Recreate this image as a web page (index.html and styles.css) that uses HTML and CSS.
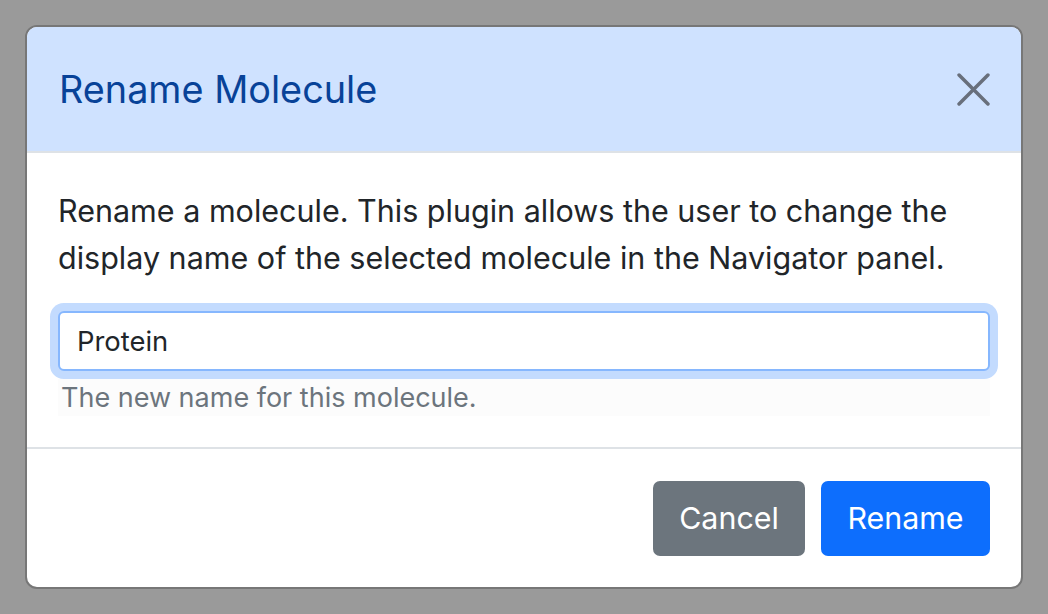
FILE: index.html
```html
<!DOCTYPE html>
<html lang="en">
<head>
<meta charset="utf-8">
<title>Rename Molecule</title>
<link rel="stylesheet" href="styles.css">
</head>
<body>
<div class="backdrop">
  <div class="modal">
    <div class="modal-header">
      <h5 class="modal-title">Rename Molecule</h5>
      <button class="btn-close" type="button" aria-label="Close">
        <svg viewBox="0 0 32 32" width="33" height="33"><path d="M2 2L30 30M30 2L2 30" stroke="currentColor" stroke-width="3.4" stroke-linecap="round" fill="none"/></svg>
      </button>
    </div>
    <div class="modal-body">
      <p class="desc">Rename a molecule. This plugin allows the user to change the display name of the selected molecule in the Navigator panel.</p>
      <input class="form-control" type="text" value="Protein">
      <div class="form-text">The new name for this molecule.</div>
    </div>
    <div class="modal-footer">
      <button class="btn btn-secondary" type="button">Cancel</button>
      <button class="btn btn-primary" type="button">Rename</button>
    </div>
  </div>
</div>
</body>
</html>
```

FILE: styles.css
```css
html, body {
  margin: 0;
  padding: 0;
  height: 100%;
}
body {
  background: #9a9a9a;
  font-family: Inter, "Liberation Sans", Arial, sans-serif;
  color: #212529;
}
.backdrop {
  padding: 25px 25px;
  box-sizing: border-box;
  height: 100%;
}
.modal {
  width: 998px;
  box-sizing: border-box;
  background: #fff;
  border: 2px solid #777;
  border-radius: 12px;
  overflow: hidden;
}
.modal-header {
  background: #cfe2ff;
  border-bottom: 2px solid #dee2e6;
  height: 126px;
  box-sizing: border-box;
  padding: 0 31px 0 32px;
  display: flex;
  align-items: center;
  justify-content: space-between;
}
.modal-title {
  margin: 0;
  font-size: 37.8px;
  font-weight: 400;
  color: #084298;
  line-height: 1;
  padding-top: 2px;
}
.btn-close {
  border: 0;
  background: transparent;
  padding: 0;
  margin: 0;
  color: #686f7c;
  display: flex;
  width: 33px;
  height: 33px;
}
.modal-body {
  padding: 34px 31px 31px 31px;
}
.desc {
  margin: 0 0 30px 0;
  font-size: 30.5px;
  line-height: 47px;
}
.form-control {
  display: block;
  box-sizing: border-box;
  width: 100%;
  height: 60px;
  margin: 0;
  padding: 0 17px;
  font-family: inherit;
  font-size: 27.4px;
  color: #212529;
  background: #fff;
  border: 2px solid #86b7fe;
  border-radius: 6px;
  box-shadow: 0 0 0 8px #c3dbfe;
  outline: none;
}
.form-text {
  margin-top: 8px;
  padding: 0 3px;
  font-size: 27px;
  line-height: 37px;
  color: #6c757d;
  background: #fcfcfc;
}
.modal-footer {
  border-top: 2px solid #dee2e6;
  padding: 32px 31px 31px;
  display: flex;
  justify-content: flex-end;
  gap: 16px;
}
.btn {
  font-family: inherit;
  font-size: 30.4px;
  height: 75px;
  padding: 0;
  border: 0;
  border-radius: 7px;
  color: #fff;
  line-height: 75px;
}
.btn-secondary {
  background: #6c757d;
  width: 152px;
}
.btn-primary {
  background: #0d6efd;
  width: 169px;
}
```
